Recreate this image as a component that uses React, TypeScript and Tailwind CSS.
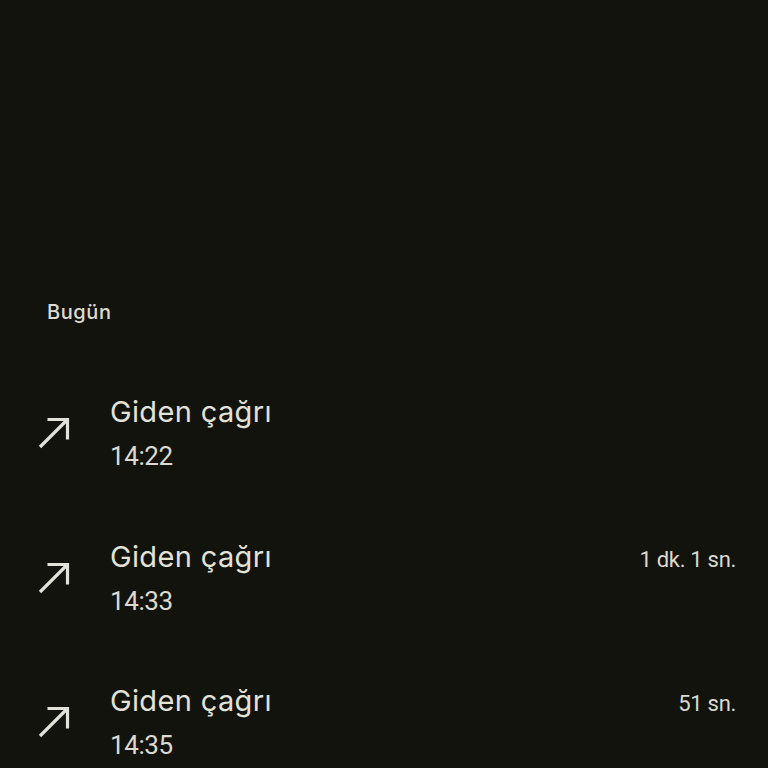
const calls = [
  { time: "14:22", duration: "" },
  { time: "14:33", duration: "1 dk. 1 sn." },
  { time: "14:35", duration: "51 sn." },
];

function OutgoingArrow() {
  return (
    <svg width="36" height="36" viewBox="0 0 36 36" fill="none" className="text-[#e3e2d8]">
      <path d="M11.5 4.5H31.5V24.5" stroke="currentColor" strokeWidth="3.2" />
      <path d="M31.5 4.5L4 32" stroke="currentColor" strokeWidth="3.2" />
    </svg>
  );
}

export default function App() {
  return (
    <div className="h-[768px] w-[768px] overflow-hidden bg-[#13130e] text-[#e3e2d8] font-['Roboto','Liberation_Sans',sans-serif]">
      <div className="pt-[300px] pl-[47px] text-[20px] leading-[24px] tracking-[0.6px] font-['Inter',sans-serif] font-medium text-[#dddcd2]">
        Bugün
      </div>
      <div className="mt-[71px] flex flex-col gap-[68.5px]">
        {calls.map((c) => (
          <div key={c.time} className="flex items-center">
            <div className="w-[110px] shrink-0 pl-[36px] flex items-center">
              <OutgoingArrow />
            </div>
            <div className="flex-1 pr-8">
              <div className="flex items-baseline justify-between">
                <span className="text-[29px] leading-[34px] tracking-[0.35px] font-['Inter',sans-serif]">Giden çağrı</span>
                {c.duration && (
                  <span className="text-[22px] leading-[26px] tracking-[-0.3px] text-[#dcdad0]">{c.duration}</span>
                )}
              </div>
              <div className="mt-[12px] text-[26px] leading-[30px] tracking-[-0.4px] text-[#dcdad0]">{c.time}</div>
            </div>
          </div>
        ))}
      </div>
    </div>
  );
}
